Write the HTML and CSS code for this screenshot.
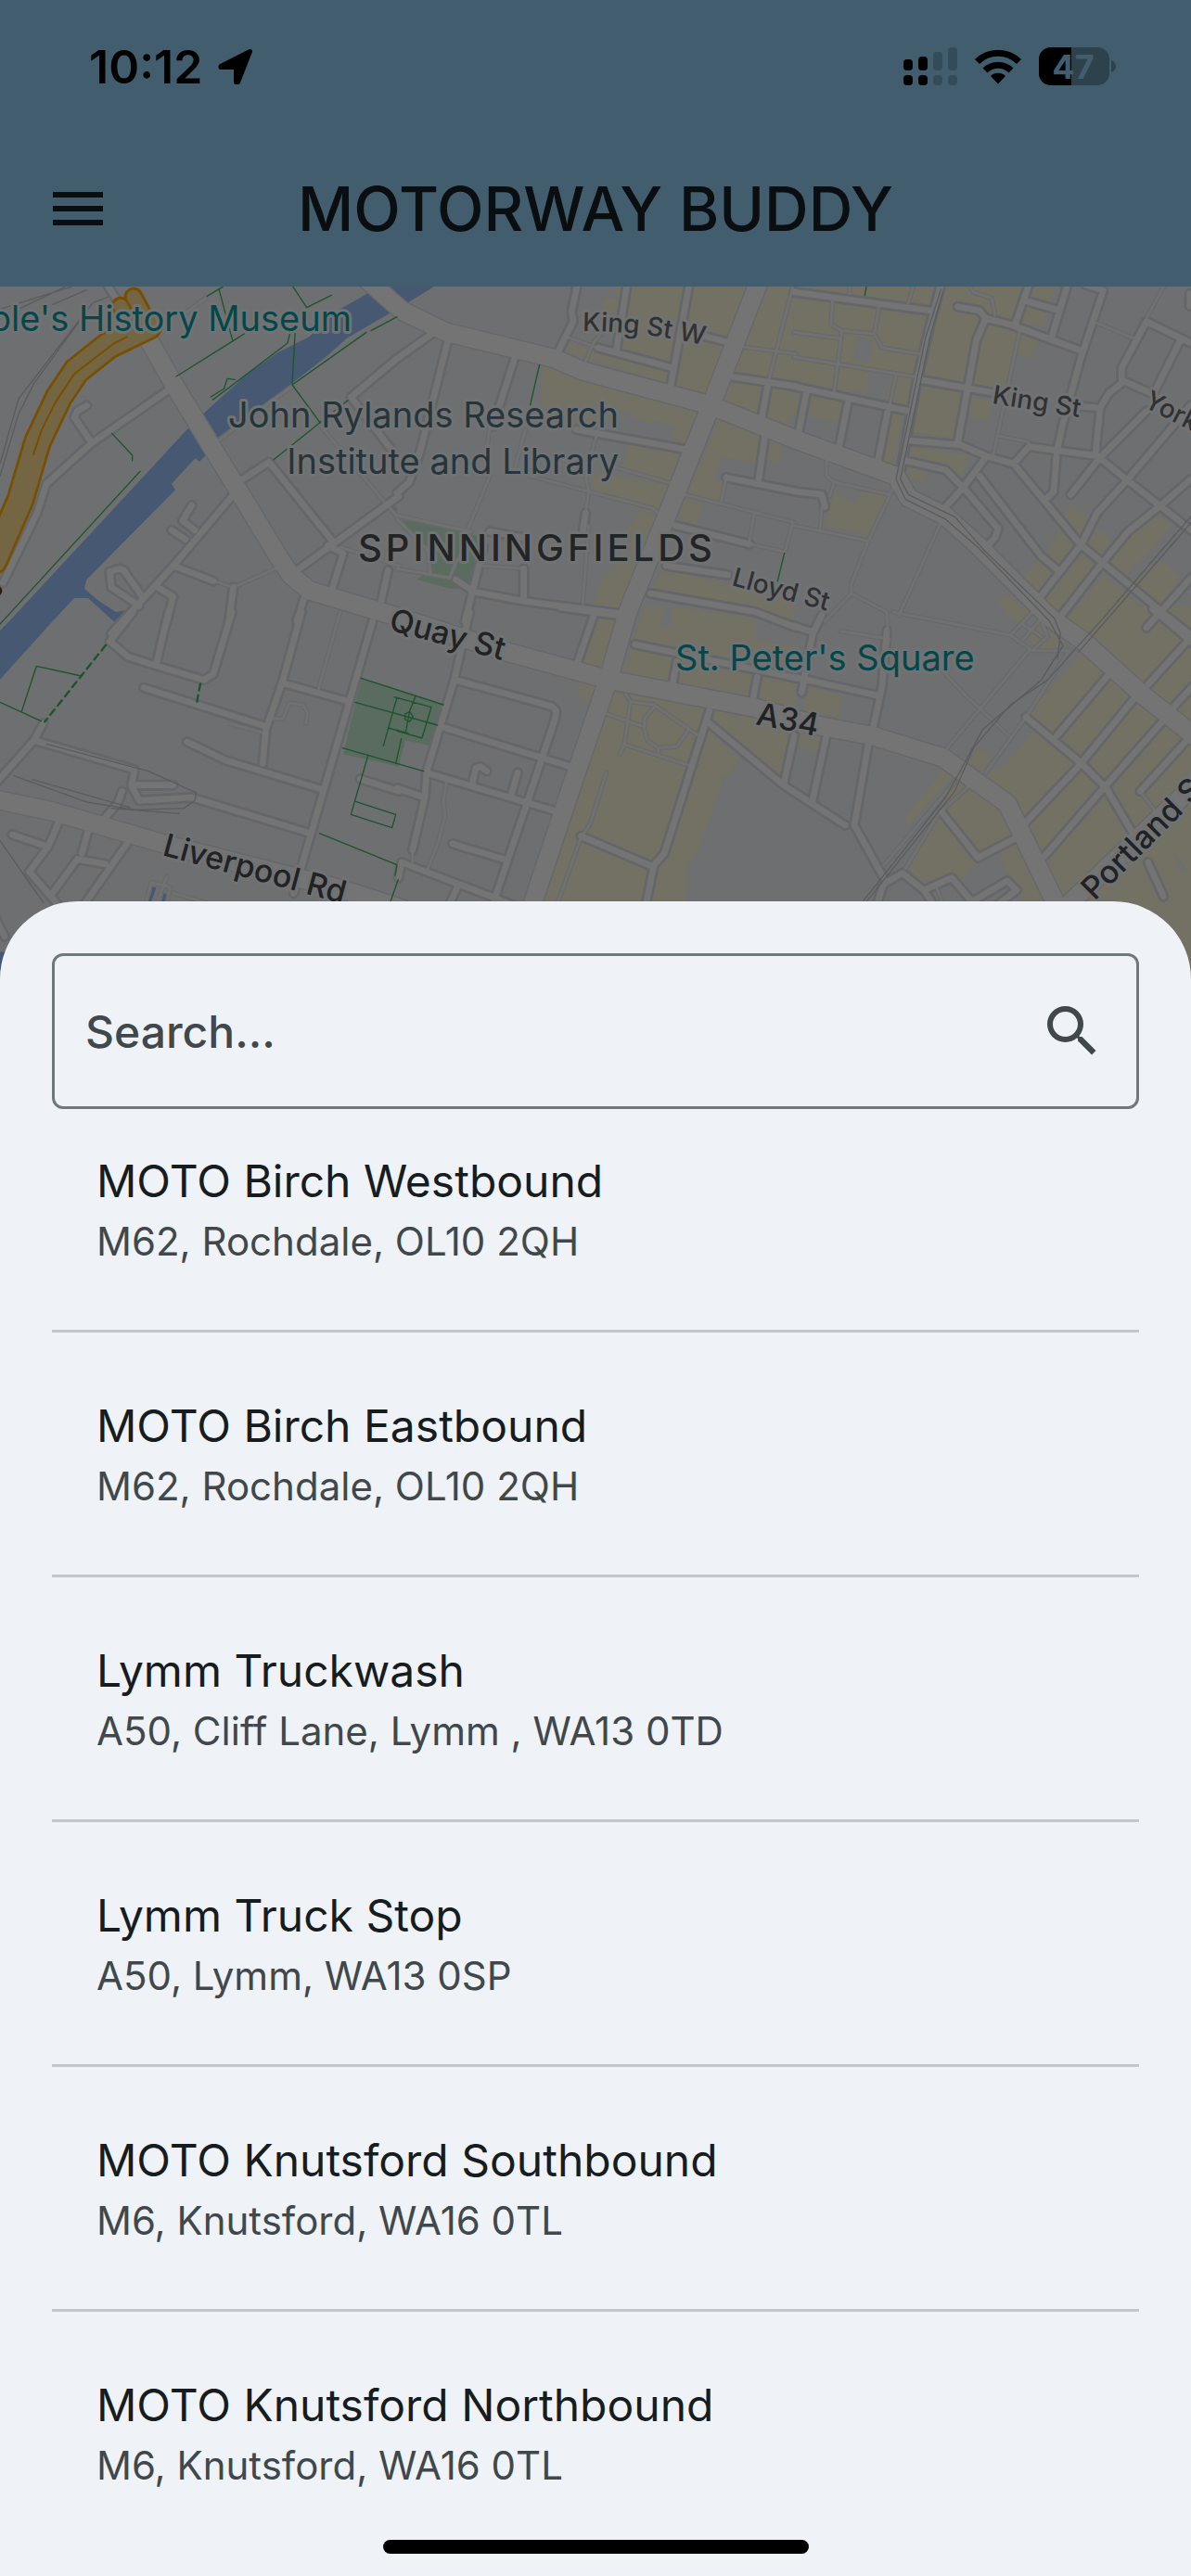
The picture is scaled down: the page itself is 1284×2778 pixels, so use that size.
FILE: index.html
```html
<!DOCTYPE html>
<html lang="en">
<head>
	<title>Motorway Buddy</title>
	<meta charset="UTF-8">
	<meta name="viewport" content="width=device-width">
	<link rel="stylesheet" href="styles.css">
</head>
<body>
	<header class="topbar">
		<div class="status">
			<span class="time">10:12</span>
			<svg class="arrow" width="40" height="40" viewBox="0 0 40 40"><path d="M4 19.500 L35.500 3.500 L22.500 36.500 L20.500 36.500 L20.500 20.500 L4 20.500 Z" stroke="#000" stroke-width="5" stroke-linejoin="round"/></svg>
			<div class="statusIcons">
				<svg width="58" height="42" viewBox="0 0 58 42">
					<rect x="0" y="13" width="10" height="12" rx="4"/>
					<rect x="16" y="10" width="10" height="15" rx="4"/>
					<rect x="0" y="30" width="10" height="11" rx="4"/>
					<rect x="16" y="30" width="10" height="11" rx="4"/>
					<g fill="#344b59">
						<rect x="32" y="5" width="10" height="20" rx="4"/>
						<rect x="48" y="0" width="10" height="25" rx="4"/>
						<rect x="32" y="30" width="10" height="11" rx="4"/>
						<rect x="48" y="30" width="10" height="11" rx="4"/>
					</g>
				</svg>
				<svg width="52" height="42" viewBox="0 0 52 42">
					<g fill="none" stroke="#000" stroke-width="7">
						<path d="M3.500 15.500 A32 32 0 0 1 48.500 15.500"/>
						<path d="M12 25 A20 20 0 0 1 40 25"/>
					</g>
					<path d="M26 39.500 L18 31 A11.500 11.500 0 0 1 34 31 Z"/>
				</svg>
				<svg width="84" height="42" viewBox="0 0 84 42">
					<rect x="0" y="0" width="76" height="41" rx="13" fill="#2e424e"/>
					<path d="M13 0 H35 V41 H13 A13 13 0 0 1 0 28 V13 A13 13 0 0 1 13 0 Z"/>
					<path d="M78 14 Q83 16 83 20.500 Q83 25 78 27 Z" fill="#2e424e"/>
					<text class="battery" x="37" y="34" text-anchor="middle">47</text>
				</svg>
			</div>
		</div>
		<div class="titlebar">
			<button class="menu" type="button" aria-label="Menu">
				<svg width="72" height="72" viewBox="0 0 24 24"><path d="M3,6H21V8H3V6M3,11H21V13H3V11M3,16H21V18H3V16Z" fill="#0b0e10"/></svg>
			</button>
			<h1>MOTORWAY BUDDY</h1>
		</div>
	</header>

	<svg class="map" viewBox="0 309 1284 760" preserveAspectRatio="xMidYMin slice" role="img" aria-label="Map">
		<defs>
			<path id="quay" d="M418 679 L560 717"/>
			<path id="kingw" d="M628 357 Q705 357 780 378"/>

			<!-- grid units: 3 per pixel, six tiles -->
			<g id="lanes">
				<path d="M1240 720 L1030 470 M1284 770 L1240 720 M700 530 L945 350 M690 980 L755 1000 L890 940 M1100 870 L1290 930 M665 65 L590 120"/>
				<g transform="translate(1284 0)">
					<path d="M550 190 L650 225 M660 180 L635 210 L610 270 M300 480 L290 560 M415 490 L380 620 M300 640 L230 810 M650 490 L610 640 L620 690 L610 760 M430 640 L830 745 L860 780 M700 610 L890 665 M0 768 L240 820 M0 780 L100 880 L108 960 M0 940 L170 970 M270 930 L410 940 M620 800 L600 1060 M1140 860 L1255 885 L1280 790 M1155 760 L1140 850 M1065 640 L1050 720 M930 700 L1284 790 M1280 28 L1200 340 M1100 220 L1290 245 M240 850 L190 920 L170 970"/>
				</g>
				<g transform="translate(2568 0)">
					<path d="M0 175 L150 195 M125 60 L120 150 L155 170 L130 370 M275 90 L260 180 L285 225 L405 245 M155 170 L260 180 M0 255 L400 320 M330 310 L310 410 M180 28 V50 M385 28 L370 80 M730 170 L690 360 L645 570 M570 28 L580 45 L640 65 L650 120 M980 145 L1100 195 M1195 28 L1140 130 M105 590 L105 640 L130 660 L310 700 M130 660 L115 705 M90 740 L85 810 M0 800 L240 850 M320 680 L240 850 L185 990 V1020 L100 1110 M185 1020 L300 1080 L305 1180 M475 790 L340 1090 M660 510 L760 530"/>
				</g>
				<g transform="translate(0 1080)">
					<path d="M1100 0 L1030 250 M885 345 H915 L935 295 L980 300 L995 325 L990 360 M470 946 L490 875 L550 890 L540 946 M560 910 L700 950 M540 855 L510 936 M745 362 L850 390"/>
				</g>
				<g transform="translate(1284 1080)">
					<path d="M160 550 L150 610 L155 660 L135 740 L100 830 M677 520 L625 685 L595 730 L520 940 M740 265 L755 290 L735 430 L720 460 M755 290 L830 300 L975 400 M680 330 L795 370 M830 310 L800 345 V380 L810 415 L845 440 L905 435 L940 385 M845 440 V460 M740 430 L940 495 M50 770 V810"/>
				</g>
				<g transform="translate(2568 1080)">
					<path d="M150 62 L310 88 M320 0 L700 75 L770 125 L890 125 M480 190 L550 265 L695 400 M760 125 L495 440 M900 110 L750 340 L620 520 M570 560 L470 650 L360 830 M290 820 L520 550 M740 40 L800 80 M800 20 L740 90 M700 75 L790 -20 M1120 580 L1180 660 M460 890 L480 940 M800 30 L820 80 L770 125"/>
				</g>
			</g>

			<g id="streets">
				<path d="M10 985 L120 760 L150 665 L295 535 L540 365 M295 530 L240 450 L250 430 L280 412 M770 660 L870 595 L1075 850 M940 960 L1290 705 M1060 865 L1110 890 L1070 1020 M755 700 L570 920 L360 1150 M600 845 L555 815 M630 815 L590 785 L620 735 M560 930 L690 980 M755 1000 L740 1110 M450 1060 L360 1000 L355 950 L385 940 L400 945 L460 1030 M510 1000 L560 1030 L540 1110 M985 1030 L960 1110 M1230 1060 L1255 945 M1284 260 L1135 385 L1270 560 M340 10 L390 90"/>
				<g transform="translate(1284 0)">
					<path d="M0 260 L120 175 M165 200 L75 560 L40 660 L0 695 M380 260 L310 480 M585 10 L565 110 L570 140 L520 240 M650 225 L890 290 M745 10 L730 110 L710 230 M945 20 L885 350 M985 185 L1080 210 M1090 320 L1290 350 M1200 340 L1180 450 M1190 510 L1170 650 M1065 645 L1290 690 M900 800 L1140 860 M580 490 L940 555 M610 760 L600 830 M190 975 L250 1015 L410 1045 L760 1090 M280 870 L220 1110 M410 940 V1040 M300 820 L410 840 M870 930 L1070 960 M820 1020 L1160 1080 L1290 1130"/>
				</g>
				<g transform="translate(2568 0)">
					<path d="M0 45 L440 105 M0 350 L370 430 M40 370 L15 500 M175 400 L145 550 M305 420 L270 600 M475 20 L440 150 L400 320 L340 650 M530 92 L600 105 L620 130 L700 150 L930 235 M620 130 L590 200 L530 530 M760 20 L715 150 M885 20 L835 185 M755 75 L860 105 M940 20 L1000 40 L930 250 L870 470 L850 560 L840 690 L810 720 M1284 210 L1140 140 L1060 290 V340 L1020 370 L990 420 L870 410 M1060 330 L1150 370 M1250 200 L1170 360 M1140 430 L990 580 L895 700 M1284 410 L1080 650 L980 760 L930 860 L790 1040 M990 420 L975 570 M415 330 L640 370 M370 525 L540 540 L620 575 L710 600 L925 860 L1190 1080 L1290 1160 M710 600 L760 545 L980 575 L1080 655 L1290 820 M360 590 L490 620 L550 680 L660 810 L650 840 L620 870 M620 580 L545 680 L490 740 M600 640 L800 900 L860 950 M1284 650 L1180 740 L1080 820 L990 930 L850 1110 M1284 970 L1140 1130 M0 690 L90 700 L100 740 M1280 50 V90"/>
				</g>
				<g transform="translate(0 1080)">
					<path d="M430 0 L355 95 L415 145 L510 175 L660 220 L690 200 L750 0 M545 0 L505 170 M975 0 L915 220 L860 380 L850 490 M465 245 L860 370 M915 230 L1130 290 M1205 30 L1130 290 L950 910 M605 420 L730 480 L1045 575 M140 360 L110 415 L-10 550 M110 415 L435 510 L425 560 L450 610 L620 600 L1000 715 M440 560 H560 M395 580 L380 620 L340 665 M190 680 L155 760 L95 840 L190 950 M40 720 L155 760 M410 750 L270 950 M170 910 L250 800 L340 815 M285 710 L265 780 M1165 540 L1290 580 M-20 980 L15 1050"/>
				</g>
				<g transform="translate(1284 1080)">
					<path d="M235 0 L185 220 L95 520 L90 600 L50 770 M190 220 L500 305 L515 320 L510 350 L420 620 L315 930 M140 370 L560 500 M95 520 L515 645 M390 520 L370 590 M245 550 L255 505 L270 500 L290 515 M180 750 L345 800 M15 810 L330 930 L500 1000 M15 810 L5 860 M640 0 L585 160 M530 -15 L740 15 M770 105 L1300 215 M905 160 L890 240 M1165 210 L1150 290 M1010 320 L865 780 L830 820 M0 570 L90 600 M595 725 L830 825 L805 946 M1010 360 L1250 560 L1450 690 M1285 400 L1250 560 M195 890 L170 946"/>
				</g>
				<g transform="translate(2568 1080)">
					<path d="M90 10 L60 70 L25 260 M0 210 L270 270 M300 60 L285 240 L255 380 M0 45 L60 65 M105 400 L60 610 M240 430 L195 690 L290 860 M750 340 L930 490 L1010 570 L1110 740 M1145 810 L1195 920 M1020 200 L850 400 M1100 280 L920 500 L750 680 M1195 350 L1010 560 L810 790 M1284 400 L1120 580 M1140 240 L1290 75 M1225 310 L1290 240 M1160 -10 L1290 100 M480 650 L595 795 L720 730 M270 940 L290 880 L350 845 L420 900 L510 860 L570 930 M420 900 L450 946 M570 940 L690 870 L720 900 L660 946"/>
				</g>
			</g>

			<g id="roads">
				<path d="M470 180 L560 340 L700 570 L900 900 L940 960 L1000 1010 L1284 1095 L1624 1205 L1974 1300 L2444 1390 L2658 1450 L2818 1480 L3048 1550 L3258 1700 L3428 2050"/>
				<path d="M2455 10 L2304 400 L2164 750 L2030 1080 L1970 1290 L1850 1640 L1724 2020"/>
				<path d="M1170 -10 L1300 105 L1444 175 L1794 260 L1884 300 L2294 410 L2568 520 L2898 640 L2938 710 L3058 770 L3158 860 L3398 1100 L3498 1170 L3698 1350 L3862 1480"/>
				<path d="M-20 1685 L170 1725 L530 1830 L1100 1975 L1300 2040"/>
				<path d="M3420 2060 L3872 1630"/>
			</g>
		</defs>

		<rect x="0" y="300" width="1284" height="780" fill="#6d6f71"/>
		<g transform="translate(0 300) scale(.33333)">
			<!-- river -->
			<g fill="#465872">
				<path d="M-50 1190 L30 1110 L605 490 L655 440 L800 310 L900 240 L1000 190 L1100 100 L1175 58 L1240 20 H1415 L1310 85 L1120 195 L1060 250 L945 340 L705 515 L660 580 L645 593 L632 582 L555 665 L567 685 L280 975 L273 1005 L320 1045 L375 1080 L405 1075 L370 1112 L335 1080 L285 1035 H240 L170 1110 L0 1298 L-50 1350 Z"/>
				<path d="M490 1968 L505 1972 L485 2030 H470 Z M530 1990 L542 1994 L530 2030 H518 Z M0 2180 H40 V2240 H0 Z"/>
			</g>

			<!-- shopping areas -->
			<g fill="#737064">
				<path transform="translate(1284 0)" d="M690 20 H1290 V360 L1190 345 L1170 445 L1060 405 L1020 380 L900 350 L720 230 L700 120 L660 110 L670 65 L720 65 Z M540 235 L560 210 L880 300 L870 340 Z M470 285 L600 320 L980 430 L940 535 L885 515 L898 480 L830 460 L820 470 L760 455 L765 435 L720 430 L660 480 L465 445 Z M750 525 L930 565 L890 660 L730 620 Z M640 630 L890 670 L850 770 L620 690 Z M1040 460 L1180 515 L1165 600 L1050 580 L1030 650 L1060 655 L1040 720 L940 700 Z M930 710 L990 730 L970 800 L905 790 Z M790 750 L850 780 L740 1080 L640 1060 L650 990 L680 960 L715 920 L750 800 Z M1200 530 L1250 545 L1235 600 L1195 585 Z M860 940 L1284 1040 V1120 L820 1010 Z M1200 350 L1290 370 V440 L1270 445 V480 L1190 455 Z"/>
				<path transform="translate(2568 0)" d="M0 45 L450 100 L370 430 L295 390 L315 315 L245 300 L235 370 L0 340 Z M0 370 L30 375 L15 445 L0 443 Z M55 375 L160 400 L140 468 L50 450 Z M320 430 L355 440 L320 610 L285 600 Z M0 20 H735 L700 150 L600 115 L550 340 L425 310 L460 100 L0 30 Z M620 140 L725 170 L690 355 L580 345 Z M415 350 L545 370 L515 515 L385 500 Z M570 380 L640 400 L630 460 L565 450 Z M770 20 H845 L830 80 L760 70 Z M750 90 L820 110 L810 160 L735 140 Z M735 180 L790 205 L770 260 L725 250 Z M370 545 L570 570 L540 640 L490 610 L360 580 Z M360 605 L425 620 L420 665 L375 650 Z M130 690 L190 730 L220 690 L310 705 L240 835 L95 800 Z M895 725 L955 775 L925 830 L875 770 Z M860 810 L900 870 L855 930 L815 885 Z M985 810 L1030 850 L990 895 L950 860 Z M790 910 L845 955 L790 1015 L740 965 Z M1180 765 L1225 800 L1060 980 L1015 920 L1090 830 Z M1100 980 L1190 910 L1250 970 L1180 1060 Z M930 895 L980 935 L860 1075 L810 1040 Z M1000 960 L1200 1120 L880 1100 Z M690 1020 L750 1075 L720 1110 L655 1050 Z"/>
				<path transform="translate(1284 1080)" d="M800 -20 H870 L850 45 L885 45 L890 -20 L1160 20 V90 L1290 110 V310 L730 200 Z M640 10 L730 25 L670 185 L595 160 Z M590 225 L650 240 L625 290 L575 275 Z M700 255 L1290 370 L1250 560 L1010 380 L1105 475 L1075 530 L1058 530 L1020 650 L965 795 L940 815 V946 H470 Z"/>
				<path transform="translate(2568 1080)" d="M930 130 L1284 430 V1190 H1000 L870 930 L620 520 L680 495 L780 380 L750 340 Z M880 20 L920 -20 H1284 V400 L940 80 Z M480 510 L520 525 L370 690 L355 670 Z M525 540 L690 640 L720 730 L600 800 L545 860 L420 885 L370 830 Z M660 790 L720 740 L820 946 H745 Z M600 440 L640 465 L610 515 L560 480 Z M45 240 L155 270 L145 340 L30 320 Z M20 395 L85 405 L75 455 L15 440 Z M770 30 L890 100 L810 125 L760 90 Z M680 0 L770 -20 L730 40 Z"/>
			</g>
			<path d="M2775 190 L2825 200 L2808 275 L2762 262 Z M3800 1860 L3845 1920 L3815 1915 Z" fill="#6d6f71"/>

			<!-- parks -->
			<path d="M1300 780 L1550 835 L1520 1000 L1460 1005 L1350 975 L1385 950 L1380 880 Z M1255 735 L1284 740 V760 Z M1170 1295 L1434 1380 L1390 1512 L1310 1495 L1290 1580 L1110 1540 Z" fill="#5a6b5f"/>

			<use href="#lanes" stroke="#68696a" stroke-width="16" class="line"/>
			<use href="#streets" stroke="#646669" stroke-width="36" class="line"/>
			<use href="#roads" stroke="#65676a" stroke-width="66" class="line"/>
			<use href="#lanes" stroke="#717171" stroke-width="9" class="line"/>
			<use href="#streets" stroke="#747474" stroke-width="20" class="line"/>
			<use href="#roads" stroke="#747474" stroke-width="58" class="line"/>

			<!-- motorway -->
			<g class="line">
				<path d="M-20 915 L65 720 L122 528 L190 385 L247 300 L350 218 L480 155 M390 90 L420 150 M432 60 L470 130" stroke="#784f00" stroke-width="62"/>
				<path d="M-20 915 L65 720 L122 528 L190 385 L247 300 L350 218 L480 155" stroke="#784f00" stroke-width="92"/>
				<path d="M-20 915 L65 720 L122 528 L190 385 L247 300 L350 218 L480 155" stroke="#746642" stroke-width="76"/>
				<path d="M390 90 L420 150 M432 60 L470 130" stroke="#746642" stroke-width="44"/>
				<path d="M108 570 L135 490 L180 400 L240 310 L370 210 L410 190" stroke="#784f00" stroke-width="6"/>
			</g>
			<circle cx="-10" cy="1012" r="17" fill="#33190b"/>

			<!-- railways -->
			<g class="line" stroke="#5a5c5e" stroke-width="4">
				<path d="M0 640 L60 440 L110 340 L300 80 L350 60 M0 600 L60 390 L300 80 M0 100 L230 28 M60 100 L210 28 M170 85 L280 38"/>
				<path d="M3043 36 L2994 190 L2898 650 L2928 715 L3058 780 L3168 875 L3395 1110 L3438 1190 L3418 1220 L3368 1300 L3178 1460 L3108 1590 L3058 1680 L2788 2020"/>
				<path d="M3048 50 L3008 190 L2912 650 L2938 700 L3088 772 L3178 875 L3410 1100 L3430 1150 L3420 1230 M3852 770 L3568 1100 L3388 1300 L3268 1380 L3148 1520 L3088 1660 L2800 2020 M3862 780 L3488 1210"/>
				<path d="M150 1507 L480 1595 L635 1665 L630 1690 L595 1715 L440 1720 L280 1695 L45 1610 M105 1622 L420 1712 M360 1715 L580 1732 M0 1820 L140 2020"/>
			</g>

			<!-- footpaths -->
			<g class="line" stroke="#1c552d" stroke-width="4">
				<path d="M670 58 L720 28 M708 35 L752 200 M570 318 L790 180 M948 28 L992 95 L1072 55 M682 384 L725 357 L735 325 L760 328 M688 394 L930 210 L940 170 M955 165 L945 345 L1185 175 M1200 170 L1284 125 M945 345 L1035 467 L885 587 M1035 467 L1125 395 M362 502 L428 573 V590 M453 625 L10 1108 L-10 1130 M1745 280 L1715 410 M2537 890 L2515 980 M2802 28 L2797 56"/>
				<path d="M0 1372 L133 1433 M70 1402 L118 1255 L263 1287 M1168 1294 L1434 1380 M1148 1372 L1415 1446 M1108 1520 L1370 1595 M1284 1356 L1240 1513 M1255 1455 L1320 1472 M1275 1355 L1395 1388 L1365 1488 L1284 1465 M1345 1350 L1325 1400 L1312 1470 M1310 1410 L1325 1402 L1336 1418 L1325 1435 L1310 1428 Z M1298 1490 L1280 1570 M1190 1545 L1135 1735 L1268 1778 L1280 1735 L1150 1693 M1033 1796 L1284 1898 L1278 1932 M1288 1945 L1262 2020"/>
				<path d="M342 1187 L145 1435 M648 1312 L637 1370" stroke-width="7" stroke-dasharray="22 16"/>
			</g>
		</g>

		<g class="labels">
			<text class="place museum" x="379" y="357" text-anchor="end">People's History Museum</text>
			<text class="place library" x="667" y="461" text-anchor="end">John Rylands Research</text>
			<text class="place library" x="667" y="511" text-anchor="end">Institute and Library</text>
			<text class="place museum" x="728" y="723">St. Peter's Square</text>
			<text class="district" x="386" y="605">SPINNINGFIELDS</text>
			<text class="road"><textPath href="#quay">Quay St</textPath></text>
			<text class="road" transform="translate(814 781) rotate(11)">A34</text>
			<text class="road" transform="translate(174 922) rotate(15)">Liverpool Rd</text>
			<text class="road" transform="translate(1180 972) rotate(-45)">Portland St</text>
			<text class="street"><textPath href="#kingw">King St W</textPath></text>
			<text class="street" transform="translate(1069 435) rotate(9)">King St</text>
			<text class="street" transform="translate(1232 438) rotate(27)">York St</text>
			<text class="street" transform="translate(788 631) rotate(15)">Lloyd St</text>
		</g>
	</svg>

	<main class="sheet">
		<form class="search">
			<input type="text" placeholder="Search..." aria-label="Search">
			<button type="button" aria-label="Find">
				<svg width="72" height="72" viewBox="0 0 24 24"><path d="M9.500,3A6.500,6.500 0 0,1 16,9.500C16,11.110 15.410,12.590 14.440,13.730L14.710,14H15.500L20.500,19L19,20.500L14,15.500V14.710L13.730,14.440C12.590,15.410 11.110,16 9.500,16A6.500,6.500 0 0,1 3,9.500A6.500,6.500 0 0,1 9.500,3M9.500,5C7,5 5,7 5,9.500C5,12 7,14 9.500,14C12,14 14,12 14,9.500C14,7 12,5 9.500,5Z" fill="#40484b"/></svg>
			</button>
		</form>
		<ul class="stops">
			<li>
				<h2>MOTO Birch Westbound</h2>
				<p>M62, Rochdale, OL10 2QH</p>
			</li>
			<li>
				<h2>MOTO Birch Eastbound</h2>
				<p>M62, Rochdale, OL10 2QH</p>
			</li>
			<li>
				<h2>Lymm Truckwash</h2>
				<p>A50, Cliff Lane, Lymm , WA13 0TD</p>
			</li>
			<li>
				<h2>Lymm Truck Stop</h2>
				<p>A50, Lymm, WA13 0SP</p>
			</li>
			<li>
				<h2>MOTO Knutsford Southbound</h2>
				<p>M6, Knutsford, WA16 0TL</p>
			</li>
			<li>
				<h2>MOTO Knutsford Northbound</h2>
				<p>M6, Knutsford, WA16 0TL</p>
			</li>
		</ul>
	</main>
	<div class="homeBar"></div>
</body>
</html>
```

FILE: styles.css
```css
*{
    box-sizing: border-box;
}
body{
    margin: 0;
    min-height: 100vh;
    display: flex;
    flex-direction: column;
    font-family: Inter, Roboto, sans-serif;
    background-color: #eff3f8;
}
h1, h2, p, ul{
    margin: 0;
    padding: 0;
}

.topbar{
    background-color: #425e6e;
    height: 309px;
}
.status{
    display: flex;
    align-items: center;
    height: 144px;
    padding: 0 80px 0 96px;
}
.time{
    font-size: 50px;
    font-weight: 600;
    line-height: 60px;
}
.arrow{
    margin-left: 16px;
}
.statusIcons{
    display: flex;
    gap: 18px;
    margin-left: auto;
}
.battery{
    font-size: 36px;
    font-weight: 700;
    fill: #425e6e;
}
.titlebar{
    display: grid;
    grid-template-columns: 72px 1fr 72px;
    align-items: center;
    height: 162px;
    padding: 0 48px;
}
.titlebar h1{
    font-size: 66px;
    font-weight: 500;
    text-align: center;
    color: #0b0e10;
    white-space: nowrap;
}
.menu, .search button{
    display: block;
    width: 72px;
    height: 72px;
    padding: 0;
    border: none;
    background: none;
    cursor: pointer;
}

.map{
    display: block;
    width: 100%;
    height: 760px;
}
.line{
    fill: none;
    stroke-linecap: round;
    stroke-linejoin: round;
}
.labels text{
    stroke: #717273;
    stroke-width: 6px;
    stroke-linejoin: round;
    paint-order: stroke;
}
.labels .place{
    font-size: 38px;
}
.labels .museum{
    fill: #05464a;
}
.labels .library{
    fill: #26343b;
}
.labels .district{
    font-size: 40px;
    font-weight: 500;
    letter-spacing: 4px;
    fill: #222426;
}
.labels .road{
    font-size: 34px;
    font-weight: 500;
    fill: #202224;
}
.labels .street{
    font-size: 28px;
    font-weight: 500;
    fill: #2f3134;
}

.sheet{
    position: relative;
    flex: 1;
    margin-top: -97px;
    padding: 56px 56px 0;
    border-radius: 84px 84px 0 0;
    background-color: #eff3f8;
}
.search{
    display: flex;
    align-items: center;
    height: 168px;
    padding: 0 33px;
    border: 3px solid #6f797b;
    border-radius: 12px;
}
.search input{
    flex: 1;
    min-width: 0;
    height: 100%;
    padding: 0;
    border: none;
    outline: none;
    background: none;
    font-family: inherit;
    font-size: 48px;
    font-weight: 500;
    color: #171c1f;
}
.search input::placeholder{
    color: #40484b;
    opacity: 1;
}
.stops{
    list-style: none;
}
.stops li{
    padding: 67px 48px 64px;
    border-bottom: 3px solid #c0c8cb;
}
.stops li:first-child{
    padding-top: 44px;
}
.stops li:last-child{
    padding-bottom: 0;
    border-bottom: none;
}
.stops h2{
    font-size: 48px;
    font-weight: 400;
    line-height: 68px;
    color: #171c1f;
}
.stops p{
    font-size: 42px;
    line-height: 62px;
    color: #40484b;
}

.homeBar{
    position: absolute;
    left: 50%;
    bottom: 24px;
    width: 459px;
    height: 15px;
    margin-left: -229px;
    border-radius: 8px;
    background-color: #000;
}
```
